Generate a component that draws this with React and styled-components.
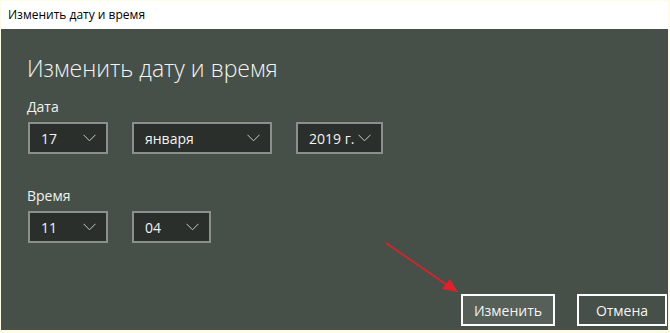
import styled, { createGlobalStyle } from 'styled-components';

const GlobalStyle = createGlobalStyle`
  html, body {
    margin: 0;
    padding: 0;
    background: #fdfde6;
  }
  body {
    font-family: "Open Sans", "Noto Sans", sans-serif;
  }
`;

const Chevron = () => (
  <svg width="13" height="8" viewBox="0 0 13 8">
    <polyline points="0.5,0.8 6.5,6.8 12.5,0.8" fill="none" stroke="#c9ccc9" strokeWidth="1" />
  </svg>
);

const DropDown = ({ value, width }) => (
  <Select $width={width}>
    <span>{value}</span>
    <Chevron />
  </Select>
);

const App = () => {
  return (
    <>
      <GlobalStyle />
      <Window>
        <TitleBar>Изменить дату и время</TitleBar>
        <Panel>
          <Heading>Изменить дату и время</Heading>
          <Label>Дата</Label>
          <Row>
            <DropDown value="17" width={80} />
            <DropDown value="января" width={140} />
            <DropDown value="2019 г." width={87} />
          </Row>
          <Label $top={33}>Время</Label>
          <Row>
            <DropDown value="11" width={80} />
            <DropDown value="04" width={79} />
          </Row>
          <Footer>
            <Button $primary>Изменить</Button>
            <Button>Отмена</Button>
          </Footer>
          <Arrow width="80" height="60" viewBox="0 0 80 60">
            <line x1="2" y1="2" x2="66" y2="46" stroke="#e0202a" strokeWidth="1.6" />
            <polygon points="74,51 58,48 66,38" fill="#e0202a" />
          </Arrow>
        </Panel>
      </Window>
    </>
  );
};

const Window = styled.div`
  display: flex;
  flex-direction: column;
  width: 667px;
  height: 329px;
  margin: 1px 0 0 1px;
`;

const TitleBar = styled.div`
  height: 28px;
  background: #ffffff;
  color: #000;
  font-size: 12px;
  line-height: 28px;
  padding-left: 7px;
`;

const Panel = styled.div`
  position: relative;
  flex: 1;
  display: flex;
  flex-direction: column;
  background: #465049;
  padding: 22px 0 4px 26px;
`;

const Heading = styled.h1`
  margin: 0;
  font-size: 23px;
  font-weight: 300;
  color: #f4f5f4;
  line-height: 34px;
`;

const Label = styled.div`
  margin-top: ${(p) => p.$top || 13}px;
  font-size: 14px;
  color: #f0f1f0;
  line-height: 18px;
`;

const Row = styled.div`
  display: flex;
  gap: 24px;
  margin-top: 6px;
  padding-left: 1px;
`;

const Select = styled.div`
  box-sizing: border-box;
  width: ${(p) => p.$width}px;
  height: 32px;
  display: flex;
  align-items: center;
  justify-content: space-between;
  padding: 0 10px 0 11px;
  background: #2a2f2b;
  border: 2px solid #8b908b;
  color: #f2f3f2;
  font-size: 14px;
`;

const Footer = styled.div`
  margin-top: auto;
  display: flex;
  justify-content: flex-end;
  gap: 22px;
  padding-right: 1px;
`;

const Button = styled.div`
  box-sizing: border-box;
  width: ${(p) => (p.$primary ? 94 : 90)}px;
  height: 32px;
  display: flex;
  align-items: center;
  justify-content: center;
  border: 2px solid #ffffff;
  background: ${(p) => (p.$primary ? '#566058' : '#465049')};
  color: #f4f5f4;
  font-size: 14px;
`;

const Arrow = styled.svg`
  position: absolute;
  left: 383px;
  top: 212px;
`;

export default App;
